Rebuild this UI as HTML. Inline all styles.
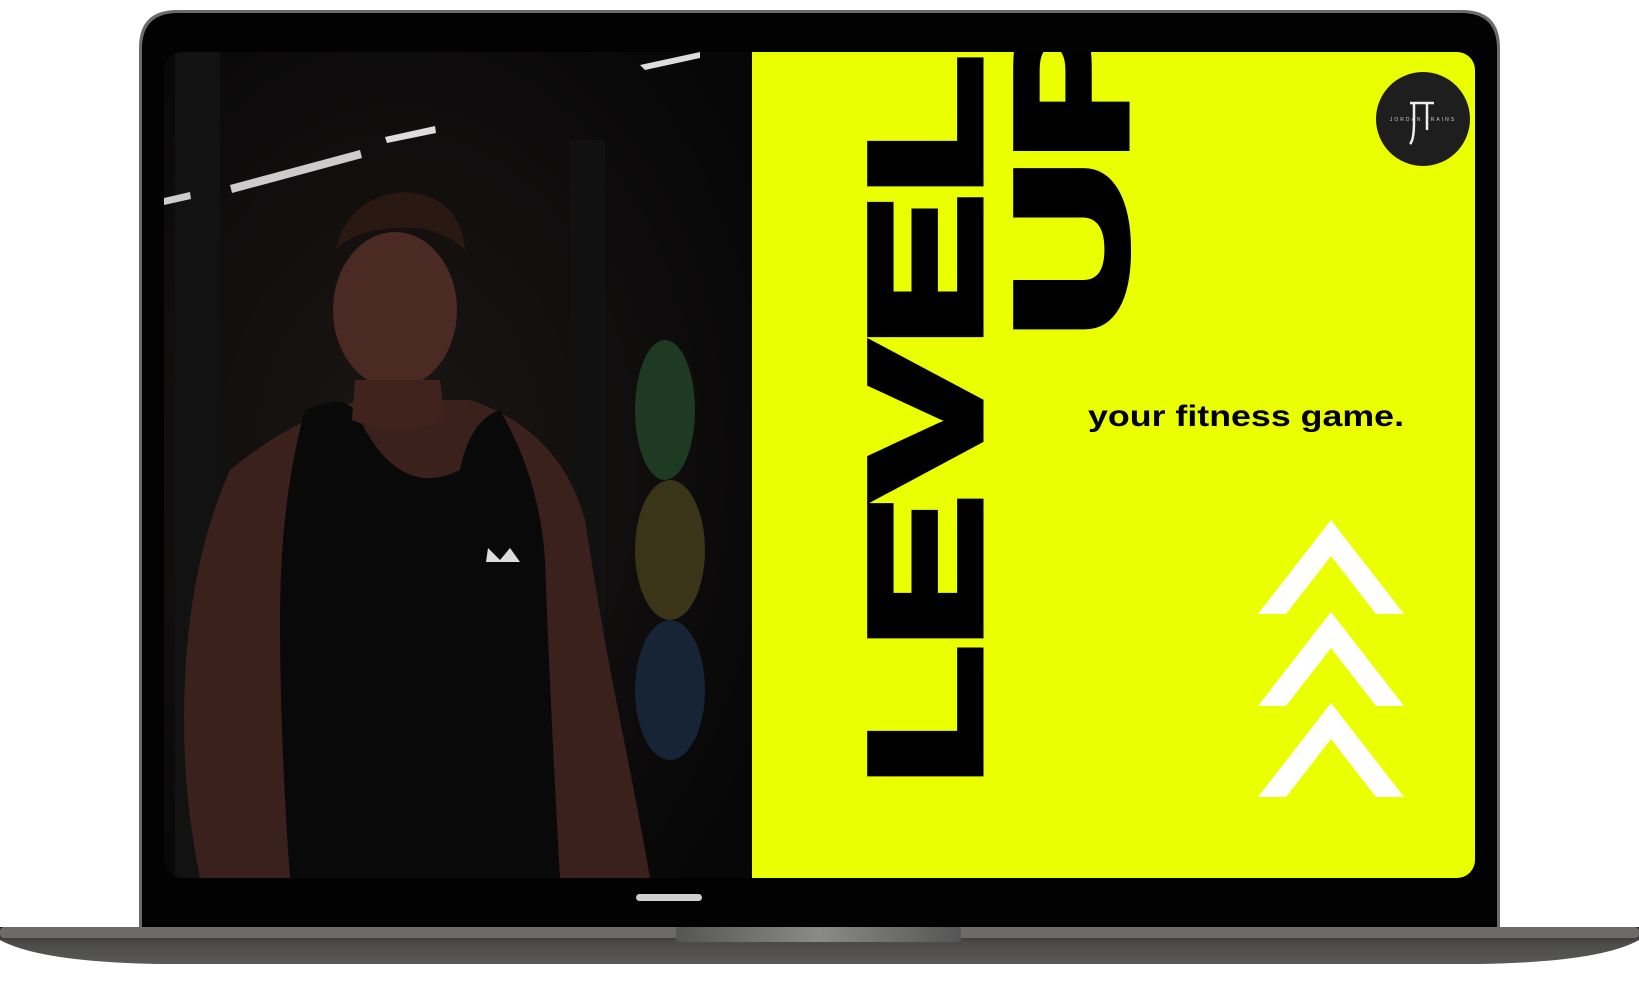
<!DOCTYPE html>
<html><head><meta charset="utf-8"><style>
html,body{margin:0;padding:0;background:#fff;width:1639px;height:986px;overflow:hidden}
svg{display:block}
</style></head><body>
<svg width="1639" height="986" viewBox="0 0 1639 986" xmlns="http://www.w3.org/2000/svg">
<defs>
<clipPath id="scr"><rect x="164" y="52" width="1311" height="826" rx="18"/></clipPath>
<linearGradient id="base" x1="0" y1="0" x2="0" y2="1">
<stop offset="0" stop-color="#1a1a1a"/><stop offset="0.4" stop-color="#4a4a48"/><stop offset="1" stop-color="#5a5957"/>
</linearGradient>
<linearGradient id="hinge" x1="0" y1="0" x2="1" y2="0">
<stop offset="0" stop-color="#555"/><stop offset="0.5" stop-color="#8a8a86"/><stop offset="1" stop-color="#555"/>
</linearGradient>
<radialGradient id="bg" cx="0.4" cy="0.5" r="0.7">
<stop offset="0" stop-color="#1c1616"/><stop offset="1" stop-color="#070707"/>
</radialGradient>
</defs>
<!-- lid -->
<path d="M139 927 V48 Q139 10 177 10 H1462 Q1500 10 1500 48 V927Z" fill="#6b6b6b"/>
<path d="M142 927 V49 Q142 13 178 13 H1461 Q1497 13 1497 49 V927Z" fill="#020202"/>
<!-- base -->
<path d="M0 927 H1639 V940 Q1600 962 1480 964 H160 Q40 962 0 940 Z" fill="url(#base)"/>
<rect x="0" y="927" width="1639" height="11" rx="4" fill="#6c6b68"/>
<rect x="676" y="927" width="285" height="15" rx="3" fill="url(#hinge)"/>
<rect x="636" y="894" width="66" height="7" rx="3.5" fill="#cfcfcf"/>
<g clip-path="url(#scr)">
<rect x="164" y="52" width="590" height="826" fill="url(#bg)"/>
<rect x="175" y="52" width="45" height="826" fill="#121212"/>
<rect x="570" y="140" width="35" height="738" fill="#111"/>
<path d="M640 65 L700 52 L700 58 L645 70Z" fill="#ddd"/>
<path d="M230 185 L360 150 L362 158 L232 193Z" fill="#ccc"/>
<path d="M385 137 L435 126 L436 133 L387 143Z" fill="#ddd"/>
<path d="M164 198 L190 192 L191 199 L164 205Z" fill="#ccc"/>
<ellipse cx="665" cy="410" rx="30" ry="70" fill="#1f3a22"/>
<ellipse cx="670" cy="550" rx="35" ry="70" fill="#3a3418"/>
<ellipse cx="670" cy="690" rx="35" ry="70" fill="#162436"/>
<path d="M230 470 Q290 420 360 400 L470 400 Q560 430 585 520 Q600 620 620 720 Q640 820 650 878 H200 Q180 780 185 680 Q190 560 230 470Z" fill="#3b211b"/>
<path d="M305 410 Q350 390 360 420 Q400 500 460 470 Q470 420 500 410 Q540 480 545 560 Q550 700 560 878 H290 Q280 740 280 620 Q280 500 305 410Z" fill="#0a0909"/>
<ellipse cx="395" cy="310" rx="62" ry="78" fill="#4a2a22"/>
<path d="M335 250 Q350 195 405 192 Q460 195 465 250 Q440 225 395 228 Q355 230 335 250Z" fill="#2a1812"/>
<path d="M355 380 H440 L445 420 Q400 440 352 420Z" fill="#3f231c"/>
<path d="M488 548 L500 560 L510 548 L520 562 H486Z" fill="#ddd"/>
<rect x="752" y="52" width="723" height="826" fill="#eaff00"/>
<text transform="translate(979,785) rotate(-90)" font-family="Liberation Sans, sans-serif" font-weight="700" font-size="156" fill="#000" stroke="#000" stroke-width="9" stroke-linejoin="miter" textLength="728" lengthAdjust="spacingAndGlyphs">LEVEL</text>
<text transform="translate(1125,337) rotate(-90)" font-family="Liberation Sans, sans-serif" font-weight="700" font-size="156" fill="#000" stroke="#000" stroke-width="9" textLength="340" lengthAdjust="spacingAndGlyphs">UP</text>
<text x="1088" y="426" font-family="Liberation Sans, sans-serif" font-weight="700" font-size="30" fill="#000" textLength="316" lengthAdjust="spacingAndGlyphs">your fitness game.</text>
<g fill="#fff">
<path d="M1331 520 L1404 614 H1376 L1331 556 L1286 614 H1258Z"/>
<path d="M1331 612 L1404 706 H1376 L1331 648 L1286 706 H1258Z"/>
<path d="M1331 703 L1404 797 H1376 L1331 739 L1286 797 H1258Z"/>
</g>
<circle cx="1423" cy="119" r="47" fill="#1e1e1e"/>
<text x="1423" y="121" text-anchor="middle" font-family="Liberation Sans, sans-serif" font-size="5" letter-spacing="2" fill="#ccc">JORDAN TRAINS</text>
<path d="M1410 103 H1434 M1414 103 V122 Q1414 140 1410 144 M1427 103 V130" stroke="#eee" stroke-width="2.5" fill="none"/>
</g>
</svg>
</body></html>
